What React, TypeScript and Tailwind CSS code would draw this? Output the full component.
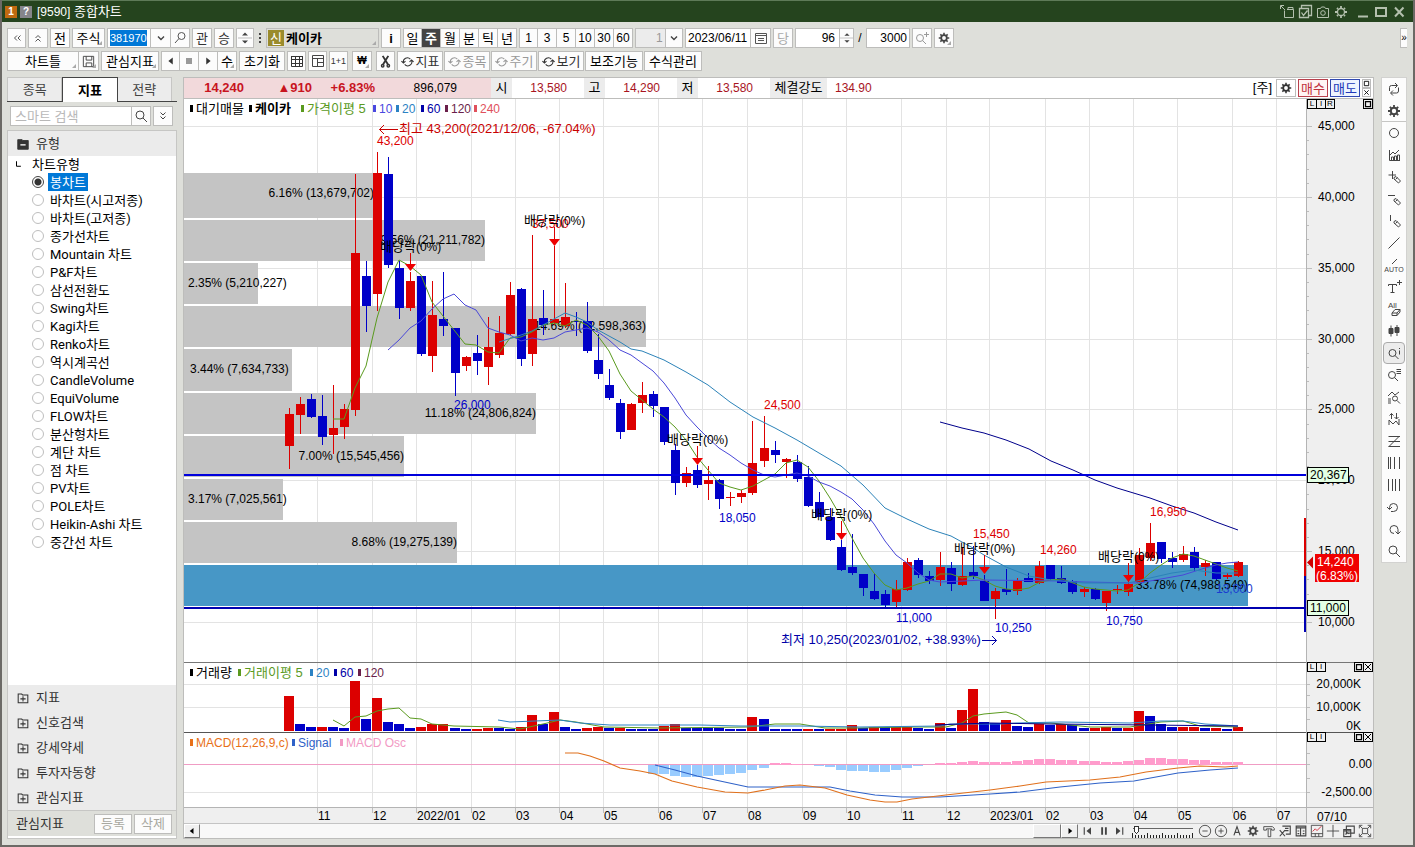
import React from "react";

const RED = "#dc0000";
const BLUE = "#0000c8";

type Candle = [string, number, number, number, number];

/* direction, body top, body bottom, high, low */
const candles: Candle[] = [
  ["u", 414, 446, 408, 469], ["u", 404, 415, 397, 434], ["d", 399, 417, 394, 418], ["d", 416, 437, 395, 445],
  ["u", 428, 435, 385, 454], ["u", 409, 427, 404, 439], ["u", 253, 410, 174, 416], ["d", 276, 306, 261, 332],
  ["u", 173, 294, 152, 311], ["d", 174, 265, 157, 268], ["d", 268, 308, 261, 319], ["u", 281, 308, 272, 311],
  ["d", 276, 354, 276, 356], ["u", 315, 356, 281, 372], ["d", 319, 326, 272, 336], ["d", 328, 373, 328, 396],
  ["u", 357, 366, 356, 371], ["d", 353, 361, 335, 375], ["u", 347, 367, 317, 385], ["u", 333, 355, 316, 358],
  ["u", 295, 334, 282, 335], ["d", 289, 359, 288, 366], ["u", 319, 354, 235, 366], ["d", 318, 325, 290, 335],
  ["u", 319, 323, 246, 325], ["u", 317, 326, 283, 328], ["d", 321, 322, 312, 336], ["d", 321, 351, 302, 353],
  ["d", 360, 374, 334, 379], ["d", 385, 398, 369, 400], ["d", 403, 432, 399, 439], ["u", 404, 430, 403, 430],
  ["u", 395, 403, 382, 413], ["d", 394, 406, 391, 417], ["d", 407, 442, 407, 445], ["d", 450, 483, 444, 495],
  ["u", 473, 483, 467, 487], ["d", 470, 485, 465, 488], ["u", 480, 484, 466, 500], ["d", 480, 499, 479, 509],
  ["u", 497, 498, 492, 506], ["u", 493, 497, 490, 503], ["u", 463, 493, 421, 495], ["u", 448, 461, 416, 467],
  ["d", 450, 455, 441, 463], ["u", 459, 462, 458, 478], ["d", 462, 479, 455, 482], ["d", 477, 506, 466, 507],
  ["d", 502, 517, 492, 517], ["d", 517, 540, 508, 541], ["d", 547, 570, 540, 571], ["d", 567, 573, 534, 575],
  ["d", 574, 588, 574, 596], ["d", 591, 599, 573, 600], ["d", 594, 605, 590, 607], ["u", 589, 602, 580, 607],
  ["u", 562, 590, 558, 591], ["d", 560, 575, 558, 578], ["d", 576, 581, 571, 584], ["u", 567, 580, 552, 586],
  ["d", 568, 584, 562, 591], ["u", 576, 585, 547, 586], ["d", 572, 576, 546, 579], ["d", 581, 601, 575, 601],
  ["u", 591, 599, 588, 619], ["d", 589, 592, 569, 595], ["u", 581, 591, 578, 595], ["d", 578, 582, 573, 582],
  ["u", 566, 583, 561, 584], ["d", 565, 579, 565, 580], ["d", 578, 583, 566, 584], ["d", 581, 592, 580, 594],
  ["u", 589, 592, 587, 597], ["d", 589, 599, 588, 600], ["u", 591, 603, 591, 611], ["u", 589, 590, 585, 594],
  ["u", 584, 592, 580, 596], ["u", 555, 582, 548, 583], ["u", 543, 558, 523, 561], ["d", 542, 559, 542, 563],
  ["d", 558, 562, 552, 568], ["u", 554, 560, 546, 562], ["d", 552, 568, 547, 571], ["u", 563, 567, 560, 576],
  ["d", 562, 579, 562, 580], ["u", 575, 577, 573, 579], ["u", 562, 576, 561, 577],
];

const barX = (i: number) => 289 + Math.round(i * 11.035);

const volumes =
  "u35 d7 d4 u4 d4 d3 u50 d12 u33 d9 d7 d3 u4 u7 u7 d3 d2 u2 u3 d3 d2 u4 u16 d7 u19 d4 d2 u3 u4 d3 u3 d2 d2 d2 u5 u7 d3 d3 d3 d3 d2 d2 u14 d12 d2 d2 d2 u2 d2 u2 u2 u6 d3 u4 d4 u4 u4 d3 d2 u8 d3 u21 u42 d9 d8 u11 d5 d4 u7 d6 u7 d6 d3 u3 u4 d3 u3 u20 d15 d7 d4 u4 u4 d3 u3 d2 u4".split(" ");

/* MACD oscillator, first value belongs to bar 33 */
const osc = [-9, -9, -11, -12, -12, -11, -10, -9, -8, -5, -3, 2, 2, 1, 0, -1, -2, -5, -6, -6, -7, -7, -5, -3, -1, 0, 2, 2, 3, 4, 3, 3, 3, 4, 5, 6, 6, 5, 5, 4, 4, 3, 3, 4, 5, 7, 7, 6, 6, 5, 5, 3, 3, 3];

const ma5 = "333,419 344,419 355,388 366,366 377,318 388,282 399,260 410,266 421,275 432,302 443,316 454,330 465,344 476,345 488,352 499,353 510,338 521,337 532,332 543,325 554,323 565,326 576,320 587,325 598,336 609,351 620,374 631,391 642,400 653,409 664,417 675,427 686,440 697,457 708,470 719,483 730,487 741,490 753,486 764,480 775,474 786,463 797,460 808,467 819,481 830,498 841,517 852,538 863,558 874,573 885,585 896,590 907,588 918,584 929,581 940,574 951,574 962,578 973,576 984,580 995,586 1006,589 1017,590 1029,588 1040,582 1051,580 1062,579 1073,583 1084,587 1095,589 1106,590 1117,591 1128,590 1139,583 1150,573 1161,565 1172,558 1183,554 1194,556 1205,560 1216,564 1227,568 1238,571";
const ma10 = "388,350 399,340 410,328 421,321 432,309 443,299 454,294 465,305 476,310 488,328 499,332 510,335 521,341 532,338 543,340 554,338 565,332 576,330 587,328 598,332 609,340 620,350 631,355 642,363 653,371 664,383 675,398 686,415 697,427 708,438 719,448 730,455 741,463 753,470 764,475 775,477 786,475 797,473 808,476 819,482 830,486 841,492 852,499 863,510 874,524 885,541 896,555 907,563 918,573 929,580 940,582 984,580 1062,581 1084,582 1139,583 1150,581 1161,579 1183,575 1205,568 1216,565 1227,563 1238,562";
const ma20 = "499,342 521,335 532,331 554,319 565,313 576,317 587,322 598,330 620,342 631,349 642,351 664,360 686,372 708,385 730,402 753,417 775,428 797,440 819,453 841,466 863,485 885,508 907,519 929,529 951,536 973,548 984,555 1006,567 1029,576 1051,580 1084,583 1128,583 1150,578 1172,573 1194,570 1216,573 1238,573";
const ma60 = "940,422 962,428 984,433 1006,440 1029,449 1051,461 1073,470 1095,480 1117,488 1150,498 1172,506 1194,513 1216,522 1238,530";
const vma5 = "333,720 344,726 355,717 366,716 377,711 388,709 399,708 410,718 421,719 432,724 454,726 499,727 520,729 543,724 560,720 576,722 604,727 660,728 748,727 775,724 800,724 825,728 860,728 907,727 946,727 962,723 973,716 984,714 1006,712 1017,715 1029,723 1051,723 1090,727 1130,727 1161,722 1183,721 1200,726 1238,727";
const vma20 = "498,720 510,722 560,720 580,723 610,725 700,725 740,726 800,726 860,727 940,726 950,724 1000,724 1017,723 1060,722 1130,723 1161,721 1183,721 1205,724 1238,726";
const vma60 = "935,725 960,724 990,723 1050,724 1150,725 1238,726";
const macd = "565,753 578,753 590,756 604,761 620,768 640,771 655,774 672,781 697,787 725,792 748,793 765,790 785,786 800,785 825,788 847,795 870,800 885,802 897,802 912,799 946,795 990,790 1020,786 1046,782 1090,780 1120,777 1146,772 1178,768 1200,766 1225,767 1238,766";
const signal = "655,765 675,770 697,776 720,781 748,787 780,787 830,787 850,791 875,795 902,797 940,797 990,794 1020,792 1060,787 1100,783 1134,781 1178,773 1210,770 1238,768";

const bands: [number, number, number, string][] = [
  [173, 45, 374, "6.16% (13,679,702)"], [220, 41, 485, "9.56% (21,211,782)"], [263, 41, 258, "2.35% (5,210,227)"],
  [306, 41, 646, "14.69% (32,598,363)"], [349, 42, 292, "3.44% (7,634,733)"], [393, 41, 536, "11.18% (24,806,824)"],
  [436, 41, 404, "7.00% (15,545,456)"], [479, 41, 283, "3.17% (7,025,561)"], [522, 41, 457, "8.68% (19,275,139)"],
  [565, 41, 1248, "33.78% (74,988,549)"],
];

const months: [number, string][] = [
  [318, "11"], [373, "12"], [417, "2022/01"], [472, "02"], [516, "03"], [560, "04"], [604, "05"], [659, "06"], [703, "07"],
  [748, "08"], [803, "09"], [847, "10"], [902, "11"], [947, "12"], [990, "2023/01"], [1046, "02"], [1090, "03"],
  [1134, "04"], [1178, "05"], [1233, "06"], [1277, "07"],
];

const prices: [number, string][] = [
  [126, "45,000"], [197, "40,000"], [268, "35,000"], [339, "30,000"], [409, "25,000"], [480, "20,000"], [551, "15,000"], [622, "10,000"],
];

const marks: [number, number, string, string][] = [
  [377, 145, "43,200", RED], [454, 409, "26,000", BLUE], [532, 228, "37,500", RED], [719, 522, "18,050", BLUE],
  [764, 409, "24,500", RED], [896, 622, "11,000", BLUE], [973, 538, "15,450", RED], [995, 632, "10,250", BLUE],
  [1040, 554, "14,260", RED], [1106, 625, "10,750", BLUE], [1150, 516, "16,950", RED], [1216, 593, "13,000", "#1a3cd0"],
];

const dividends: [number, number, number][] = [
  [410, 246, 264], [554, 220, 239], [697, 439, 458], [841, 514, 533], [984, 548, 567], [1128, 556, 575],
];

type Legend = [number, string, string, boolean?];
const priceLegend: Legend[] = [
  [190, "대기매물", "#000"], [249, "케이카", "#000", true], [301, "가격이평 5", "#5a9a1e"], [373, "10", "#4a48e0"],
  [396, "20", "#2b82c4"], [421, "60", "#0000a8"], [445, "120", "#6a1f4a"], [474, "240", "#e0505c"],
];
const volumeLegend: Legend[] = [
  [190, "거래량", "#000"], [238, "거래이평 5", "#5a9a1e"], [310, "20", "#2b82c4"], [334, "60", "#0000a8"], [358, "120", "#6a1f4a"],
];
const macdLegend: Legend[] = [
  [190, "MACD(12,26,9,c)", "#e87018"], [292, "Signal", "#2f62c8"], [340, "MACD Osc", "#f29ac4"],
];

function LegendRow({ items, y, latin }: { items: Legend[]; y: number; latin?: boolean }) {
  return (
    <g>
      {items.map(([x, label, color, bold]) => (
        <g key={x} fill={color}>
          <rect x={x} y={y - 8} width="3" height="7" shapeRendering="crispEdges" />
          <text x={x + 6} y={y} fontSize={latin || /^\d/.test(label) ? 12 : 13} fontWeight={bold ? 700 : 400}>{label}</text>
        </g>
      ))}
    </g>
  );
}

function Chart() {
  return (
    <svg viewBox="184 99 1189 725" className="block h-auto w-full bg-white" role="img" aria-label="케이카 주봉 차트" fontSize="12">
      <rect x="1307" y="99" width="66" height="725" fill="#efefef" />
      <rect x="184" y="808" width="1189" height="16" fill="#efefef" />
      <g stroke="#e3e3e3" shapeRendering="crispEdges">
        {months.map(([x]) => <path key={x} d={`M${x - 1}.5 99V807`} />)}
        {prices.map(([y]) => <path key={y} d={`M184 ${y}.5H1306`} />)}
        {[684, 707, 792].map((y) => <path key={y} d={`M184 ${y}.5H1306`} />)}
      </g>
      <g shapeRendering="crispEdges">
        {bands.map(([y, h, right]) => (
          <rect key={y} x="184" y={y} width={right - 184} height={h} fill={right === 1248 ? "#4797c6" : "#c4c4c4"} />
        ))}
      </g>
      {bands.map(([y, , right, label]) => (
        <text key={y} x={right < 300 ? (right === 292 ? 190 : 188) : right} y={y + 24} textAnchor={right < 300 ? "start" : "end"}>{label}</text>
      ))}

      <g shapeRendering="crispEdges">
        {candles.map(([dir, top, bottom, high, low], i) => (
          <g key={i} fill={dir === "u" ? RED : BLUE}>
            <rect x={barX(i)} y={high} width="1" height={low - high} />
            <rect x={barX(i) - 4} y={top} width="9" height={bottom - top} />
          </g>
        ))}
      </g>
      <g fill="none" strokeWidth="1">
        <polyline points={ma5} stroke="#5a9a1e" />
        <polyline points={ma10} stroke="#4a48d8" />
        <polyline points={ma20} stroke="#2b82b8" />
        <polyline points={ma60} stroke="#00008b" />
      </g>
      <g shapeRendering="crispEdges">
        <rect x="184" y="474" width="1123" height="2" fill="#0000dc" />
        <rect x="184" y="607" width="1123" height="2" fill="#0000b0" />
        <rect x="1304" y="518" width="3" height="58" fill={RED} />
        <rect x="1304" y="576" width="3" height="56" fill="#0000b4" />
      </g>

      {marks.map(([x, y, label, color]) => <text key={x} x={x} y={y} fill={color} fontSize="12">{label}</text>)}
      {dividends.map(([x, y, tip]) => (
        <g key={x}>
          <path d={`M${x}.5 ${y + 7}V${tip}`} stroke={RED} />
          <path d={`M${x - 5} ${tip}h11l-5.500 7z`} fill="#ee0000" />
          <text x={x - 30} y={y + 5} fontSize="13">배당락<tspan fontSize="12">(0%)</tspan></text>
        </g>
      ))}
      <path d="M398 129.500H379.500M384 125l-4.500 4.500 4.500 4.500" fill="none" stroke="#c80000" />
      <text x="399" y="133" fontSize="13" fill="#c80000">최고 43,200(2021/12/06, -67.04%)</text>
      <text x="781" y="644" fontSize="13" fill="#0000a8">최저 10,250(2023/01/02, +38.93%)</text>
      <path d="M982 640.500H996.500M992 636l4.500 4.500-4.500 4.500" fill="none" stroke="#0000a8" />
      <LegendRow items={priceLegend} y={113} />

      <g shapeRendering="crispEdges">
        {volumes.map((v, i) => (
          <rect key={i} x={barX(i) - 5} y={731 - Number(v.slice(1))} width="10" height={v.slice(1)} fill={v[0] === "u" ? RED : BLUE} />
        ))}
        <rect x="184" y="662" width="1189" height="1" fill="#777" />
        <rect x="184" y="732" width="1189" height="1" fill="#555" />
        <rect x="184" y="764" width="1122" height="1" fill="#f09cc4" />
        {osc.map((v, i) => (
          <rect key={i} x={barX(i + 33) - 5} y={v > 0 ? 765 - v : 765} width="10" height={Math.abs(v)} fill={v > 0 ? "#ff9ccc" : "#99ccff"} />
        ))}
        <rect x="1306" y="99" width="1" height="725" fill="#b4b4b4" />
        <rect x="184" y="807" width="1189" height="1" fill="#b4b4b4" />
        <rect x="184" y="823" width="1189" height="1" fill="#c4c4c4" />
      </g>
      <g fill="none" strokeWidth="1">
        <polyline points={vma5} stroke="#5a9a1e" />
        <polyline points={vma20} stroke="#2b82c4" />
        <polyline points={vma60} stroke="#00008b" />
        <polyline points={signal} stroke="#2f62c8" strokeWidth="1.2" />
        <polyline points={macd} stroke="#e0701c" strokeWidth="1.2" />
      </g>
      <LegendRow items={volumeLegend} y={677} />
      <LegendRow items={macdLegend} y={747} latin />

      <g stroke="#bdbdbd" shapeRendering="crispEdges">
        {months.map(([x]) => <path key={x} d={`M${x - 1}.5 808v5`} />)}
        {Array.from({ length: 36 }, (_, i) => <path key={i} d={`M1307 ${Math.round(126 + i * 14.17)}.5h${i % 5 ? 2 : 5}`} />)}
        {[684, 695, 707, 719, 753, 764, 778, 792].map((y) => <path key={y} d={`M1307 ${y}.5h3`} />)}
      </g>
      {months.map(([x, label]) => <text key={x} x={x} y="820">{label}</text>)}
      {prices.map(([y, label]) => <text key={y} x="1318" y={y + 4}>{label}</text>)}
      <text x="1317" y="821">07/10</text>
      <g textAnchor="end">
        <text x="1361" y="688">20,000K</text>
        <text x="1361" y="711">10,000K</text>
        <text x="1361" y="730">0K</text>
        <text x="1372" y="768">0.00</text>
        <text x="1372" y="796">-2,500.00</text>
      </g>
      <g shapeRendering="crispEdges">
        <rect x="1307.500" y="467.500" width="41" height="15" fill="#e4ffe4" stroke="#000" />
        <rect x="1307.500" y="600.500" width="41" height="15" fill="#e4ffe4" stroke="#000" />
        <rect x="1315" y="554" width="44" height="28" fill="#f00000" />
      </g>
      <path d="M1307 562.500l6-6v12z" fill="#d00000" />
      <text x="1310" y="479">20,367</text>
      <text x="1310" y="612">11,000</text>
      <text x="1317" y="566" fill="#fff">14,240</text>
      <text x="1316" y="580" fill="#fff">(6.83%)</text>
    </svg>
  );
}

function Icon({ children, size = 16, className = "" }: { children: React.ReactNode; size?: number; className?: string }) {
  return (
    <svg width={size} height={size} viewBox="0 0 16 16" fill="none" stroke="currentColor" className={`shrink-0 ${className}`} aria-hidden="true">
      {children}
    </svg>
  );
}

const gear = (
  <>
    <circle cx="8" cy="8" r="3.200" strokeWidth="2" />
    <path d="M8 2v2.500M8 11.500V14M2 8h2.500M11.500 8H14M3.800 3.800l1.700 1.700M10.500 10.500l1.700 1.700M3.800 12.200l1.700-1.700M10.500 5.500l1.700-1.700" strokeWidth="1.800" />
  </>
);
const magnifier = <><circle cx="7" cy="7" r="4" /><path d="M10 10l4 4" /></>;
const cycle = <path d="M3 9.500a5 5 0 0 1 8.500-4.500M13 6.500a5 5 0 0 1-8.500 5M.500 7.500L3 10l2.500-2.500M10.500 8.500L13 6l2.500 2.500" strokeWidth="1.300" />;
const pencil = <path d="M8 8.500l2-1 4.500 4.500-2 2L8 10zM9.500 10.500l2-2" />;
const triLeft = <path d="M10 4v8L5 8z" fill="currentColor" stroke="none" />;
const triRight = <path d="M6 4v8l5-4z" fill="currentColor" stroke="none" />;
const spin = <path d="M8 2.500l3 3H5zM8 13.500l3-3H5z" fill="currentColor" stroke="none" />;
const chevron = <path d="M5 6.500l3 3 3-3" strokeWidth="1.400" />;

const tools: [string, React.ReactNode][] = [
  ["새로고침", <path d="M3.500 10V6.500a2 2 0 0 1 2-2H11M9 2l2.500 2.500L9 7M12.500 6.500V10a2 2 0 0 1-2 2H5M7 9.500L4.500 12 7 14.500" />],
  ["설정", gear],
  ["원", <circle cx="8" cy="8" r="4.500" />],
  ["차트", <path d="M3.500 3v10.500H14M5.500 13v-3h2v3M8.500 13V9h2v4M11.500 13V8h2v5M4 8l3-3 2 2 4-4" />],
  ["십자선", <><path d="M6.500 2v8M2.500 6H10" />{pencil}</>],
  ["수평선", <><path d="M2 4.500h7" />{pencil}</>],
  ["수직선", <><path d="M4.500 2v6" />{pencil}</>],
  ["추세선", <path d="M2.500 13.500l11-11" />],
  ["자동 추세선", <path d="M6 6l5-5" />],
  ["글자", <><path d="M2.500 7V5.500h8V7M6.500 5.500V14M4.500 13.500h4M11 3.500h5M13.500 1v5" /></>],
  ["모두 지우기", <><text x="2" y="7" fontSize="8" fill="currentColor" stroke="none">All</text><path d="M6 12l3-3.500h5L11 12zM6 12v2.500h5V12M11 14.500l3-3.500V8.500" /></>],
  ["봉", <path d="M5 2.500v11M11 2v11M3 5.500h4v5H3zM9 4.500h4v5H9z" fill="currentColor" />],
  ["정보 확대", <><circle cx="6.500" cy="8" r="3.500" /><path d="M9 10.500l3.500 3.500M13.500 5.500v4M13.500 3v1" /></>],
  ["목록 확대", <><circle cx="6" cy="8" r="3.500" /><path d="M8.500 10.500L12 14M10.500 2.500H15M10.500 4.500H15M10.500 6.500H15" /></>],
  ["패턴 검색", <><path d="M2 7l4-4 3 3 4-3M2 10h3M2 12h3M2 14h3" /><circle cx="9" cy="9.500" r="2.500" /><path d="M11 11.500l3 3" /></>],
  ["지그재그", <path d="M3 14V9l4 4 3-3 3 4V8M5.500 8V2.500M3.500 4.500l2-2 2 2M10.500 2v6M8.500 6l2 2 2-2" />],
  ["되돌림", <path d="M2.500 3.500H14M2.500 8.500H14M2.500 13.500H14M13 3.500L3 13.500" />],
  ["시간대", <path d="M2.500 2v12M4.500 2v12M8.500 2v12M13.500 2v12" />],
  ["주기선", <path d="M2.500 2v12M6.500 2v12M9.500 2v12M13.500 2v12" />],
  ["실행 취소", <path d="M5 12.500h2.500a4 4 0 1 0-4-4V10M1 8l2.500 2.500L6 8" />],
  ["다시 실행", <path d="M8 12.500a4 4 0 1 1 4-4v4M9.500 10.500l2.500 2.500 2.500-2.500" />],
  ["확대", magnifier],
];

const btn = "flex h-5 shrink-0 items-center justify-center border border-[#bdbdbb] bg-[#fcfcfc] leading-none whitespace-nowrap";

function Corner() {
  return <span className="absolute right-0.5 bottom-0.5 border-2 border-transparent border-r-[#aaa] border-b-[#aaa]" />;
}

function Btn({ w, label, children, className = "", corner }: { w: string; label?: string; children?: React.ReactNode; className?: string; corner?: boolean }) {
  return (
    <button type="button" aria-label={label} className={`${btn} relative ${w} ${className}`}>
      {children}
      {corner && <Corner />}
    </button>
  );
}

function PeriodGroup({ items, w, active, className = "" }: { items: string[]; w: string; active?: string; className?: string }) {
  return (
    <div className={`flex ${className}`}>
      {items.map((t) => (
        <button key={t} type="button" className={`flex h-5 items-center justify-center border-y border-r border-[#bdbdbb] leading-none first:border-l ${w} ${t === active ? "bg-[#444] font-bold text-white" : "bg-[#fcfcfc]"}`}>{t}</button>
      ))}
    </div>
  );
}

function Toolbar() {
  return (
    <div className="flex flex-col gap-[3px] pt-1.5 pb-1.5">
      <div className="flex items-center gap-0.5">
        <Btn w="w-[19px]" label="처음" className="text-[#555]"><Icon><path d="M8 5.500L5.500 8 8 10.500M11.500 5.500L9 8l2.500 2.500" /></Icon></Btn>
        <Btn w="w-5" label="접기" className="text-[#555]"><Icon><path d="M5.500 8L8 5.500l2.500 2.500M5.500 11.500L8 9l2.500 2.500" /></Icon></Btn>
        <Btn w="w-5">전</Btn>
        <Btn w="w-[33px]" corner>주식</Btn>
        <div className="flex">
          <div className="flex h-5 w-11 items-center border border-[#bdbdbb] bg-white px-0.5">
            <input aria-label="종목코드" defaultValue="381970" className="h-4 w-[37px] bg-[#0078d7] text-[11px] text-white outline-none" />
          </div>
          <Btn w="w-5" label="종목 목록" className="border-l-0 text-[#444]"><Icon>{chevron}</Icon></Btn>
          <Btn w="w-[19px]" label="종목 검색" className="border-l-0 text-[#555]"><Icon><circle cx="9.500" cy="6" r="3.500" /><path d="M7 8.500l-4 4.500" /></Icon></Btn>
        </div>
        <Btn w="w-5" className="text-[#333]">관</Btn>
        <Btn w="w-5" className="text-[#333]">승</Btn>
        <Btn w="w-[18px]" label="위아래" className="text-[#444]"><Icon>{spin}<path d="M1 8h14" stroke="#bbb" /></Icon></Btn>
        <Icon className="-mx-1"><path d="M7 3h2v2H7zM7 7h2v2H7zM7 11h2v2H7z" fill="#444" stroke="none" /></Icon>
        <button type="button" className="relative flex h-5 w-[113px] items-center gap-0.5 border border-[#bdbdbb] bg-[#dedfda] px-px text-[13px] leading-none font-bold">
          <span className="flex size-4 items-center justify-center bg-[#9a8b2c] font-normal text-white">신</span>케이카
          <Corner />
        </button>
        <Btn w="w-5" className="font-bold">i</Btn>
        <PeriodGroup items={["일", "주", "월", "분", "틱", "년"]} w="w-[19px]" active="주" />
        <PeriodGroup items={["1", "3", "5", "10", "30", "60"]} w="w-[19px]" className="text-xs" />
        <div className="relative h-5 w-12 shrink-0">
          <select aria-label="주기 값" defaultValue="1" className="h-5 w-full appearance-none border border-[#bdbdbb] bg-[#ececec] pl-5 text-xs text-[#999]"><option>1</option></select>
          <span className="pointer-events-none absolute top-0 right-0 flex h-5 w-[18px] items-center justify-center border border-[#bdbdbb] bg-[#fcfcfc] text-[#444]"><Icon>{chevron}</Icon></span>
        </div>
        <div className="flex">
          <input aria-label="기준일" defaultValue="2023/06/11" className="h-5 w-[66px] border border-[#bdbdbb] bg-white pl-0.5 text-xs outline-none" />
          <Btn w="w-5" label="달력" className="border-l-0 text-[#555]"><Icon><path d="M2.500 3.500h11v10h-11zM3 5.500h10M5 8.500h6M5 10.500h6" /></Icon></Btn>
        </div>
        <Btn w="w-5" className="text-[#aaa]">당</Btn>
        <div className="flex">
          <input aria-label="표시 봉수" defaultValue="96" className="h-5 w-[45px] border border-[#bdbdbb] bg-white pr-1 text-right text-xs outline-none" />
          <Btn w="w-3.5" label="봉수 조절" className="border-l-0 text-[#444]"><Icon size={14}>{spin}<path d="M0 8h16" stroke="#bbb" /></Icon></Btn>
        </div>
        <span className="w-2 text-center text-xs">/</span>
        <input aria-label="전체 봉수" defaultValue="3000" className="h-5 w-11 border border-[#bdbdbb] bg-white pr-0.5 text-right text-xs outline-none" />
        <Btn w="w-5" label="확대" className="text-[#999]"><Icon><circle cx="6" cy="8" r="3.500" /><path d="M8.500 10.500L12 14M10 4.500h5M12.500 2v5" /></Icon></Btn>
        <Btn w="w-5" label="설정" corner className="text-[#444]"><Icon size={14}>{gear}</Icon></Btn>
        <button type="button" aria-label="더보기" className="ml-auto h-5 w-[7px] border border-r-0 border-[#bdbdbb] bg-[#fcfcfc] text-[10px] leading-none">»</button>
      </div>
      <div className="flex items-center gap-0.5">
        <div className="flex">
          <Btn w="w-[72px]" corner>차트틀</Btn>
          <Btn w="w-5" label="저장" corner className="border-l-0 text-[#444]"><Icon size={15}><path d="M2.500 2.500h11v11h-11zM5.500 2.500v4h6v-4M5.500 13.500v-4h6v4" /></Icon></Btn>
        </div>
        <Btn w="w-[58px]" corner>관심지표</Btn>
        <div className="flex">
          <Btn w="w-[19px]" label="이전" className="text-[#333]"><Icon size={14}>{triLeft}</Icon></Btn>
          <Btn w="w-[19px]" label="정지" className="border-l-0 bg-[#ececec] text-[#999]"><Icon><path d="M5 5h6v6H5z" fill="currentColor" stroke="none" /></Icon></Btn>
          <Btn w="w-[19px]" label="다음" className="border-l-0 text-[#333]"><Icon size={14}>{triRight}</Icon></Btn>
          <Btn w="w-[19px]" corner className="border-l-0">수</Btn>
        </div>
        <Btn w="w-[46px]">초기화</Btn>
        <Btn w="w-[19px]" label="표" className="text-[#333]"><Icon><path d="M2.500 3v10.500h11V3M2 3.500h12M2 6.500h12M2 10.500h12M6.500 3v10.500M10.500 3v10.500" /></Icon></Btn>
        <Btn w="w-[19px]" label="화면 분할" className="text-[#444]"><Icon><path d="M2.500 2.500h11v11h-11zM2.500 5.500h11M7.500 5.500v8M7.500 9.500h6" /></Icon></Btn>
        <Btn w="w-[19px]" className="text-[9px] text-[#333]">1+1</Btn>
        <Btn w="w-5" corner className="ml-0.5 text-[10px] font-bold">₩</Btn>
        <Btn w="w-[19px]" label="자르기" className="ml-0.5 text-[#333]"><Icon size={15}><path d="M5 2l5.500 9M11 2L5.500 11" strokeWidth="2" /><circle cx="5" cy="12.500" r="1.300" strokeWidth="1.500" /><circle cx="11" cy="12.500" r="1.300" strokeWidth="1.500" /></Icon></Btn>
        <div className="flex gap-px">
          {["지표", "종목", "주기", "보기"].map((t, i) => (
            <Btn key={t} w="w-[46px]" className={i === 1 || i === 2 ? "gap-0.5 bg-[#f0f0f0] text-[#999]" : "gap-0.5 text-[#333]"}><Icon size={13}>{cycle}</Icon>{t}</Btn>
          ))}
          <Btn w="w-[58px]">보조기능</Btn>
          <Btn w="w-[58px]">수식관리</Btn>
        </div>
      </div>
    </div>
  );
}

const chartTypes = ["봉차트", "바차트(시고저종)", "바차트(고저종)", "종가선차트", "Mountain 차트", "P&F차트", "삼선전환도", "Swing차트", "Kagi차트", "Renko차트", "역시계곡선", "CandleVolume", "EquiVolume", "FLOW차트", "분산형차트", "계단 차트", "점 차트", "PV차트", "POLE차트", "Heikin-Ashi 차트", "중간선 차트"];

function Sidebar() {
  return (
    <aside className="flex w-[170px] shrink-0 flex-col">
      <div className="flex h-[25px] border-b border-[#444] pr-[5px]">
        <button type="button" className="flex-1 border border-b-0 border-[#c6c6c4] bg-[#ececec] leading-none text-[#444]">종목</button>
        <button type="button" className="-mb-px flex-1 border border-b-0 border-[#444] bg-white leading-none font-bold">지표</button>
        <button type="button" className="flex-1 border border-b-0 border-l-0 border-[#c6c6c4] bg-[#ececec] leading-none text-[#444]">전략</button>
      </div>
      <div className="flex px-[3px] py-1">
        <input aria-label="스마트 검색" placeholder="스마트 검색" className="h-5 w-[122px] border border-[#bdbdbb] bg-white px-1 outline-none placeholder:text-[#b8b8b8]" />
        <Btn w="w-[19px]" label="검색" className="border-l-0 text-[#444]"><Icon>{magnifier}</Icon></Btn>
        <Btn w="w-5" label="펼치기" className="ml-0.5 text-[#444]"><Icon><path d="M5.500 4.500L8 7l2.500-2.500M5.500 8.500L8 11l2.500-2.500" /></Icon></Btn>
      </div>
      <div className="flex flex-1 flex-col border border-[#c6c6c4] bg-white">
        <button type="button" className="flex h-[25px] items-center gap-1.5 bg-[#ebebeb] px-2 text-[#333]">
          <Icon size={14}><path d="M2 3h5l1 1h6v10H2z" fill="#333" /><path d="M5 9h6" stroke="#fff" strokeWidth="1.500" /></Icon>유형
        </button>
        <div className="flex h-[17px] items-center gap-2 px-1.5 leading-none">
          <Icon size={10}><path d="M4 2v8h7" strokeWidth="1.600" /></Icon>차트유형
        </div>
        <fieldset className="flex-1 font-['Roboto','Noto_Sans_CJK_KR',sans-serif]">
          {chartTypes.map((t, i) => (
            <label key={t} className="flex h-[18px] items-center gap-1 pl-6 leading-none whitespace-nowrap">
              <input type="radio" name="chart-type" defaultChecked={i === 0} className="peer size-3 appearance-none rounded-full border border-[#bebebe] bg-white checked:border-[#444] checked:bg-[radial-gradient(circle,#333_0_3px,#fff_4px)]" />
              <span className="flex h-[18px] items-center px-0.5 peer-checked:bg-[#0078d7] peer-checked:text-white">{t}</span>
            </label>
          ))}
        </fieldset>
        <div className="bg-[#ebebeb]">
          {["지표", "신호검색", "강세약세", "투자자동향", "관심지표"].map((t) => (
            <button key={t} type="button" className="flex h-[25px] w-full items-center gap-1.5 px-2 leading-none text-[#333]">
              <Icon size={14}><path d="M2.500 3.500h4l1 1h6v9h-11zM5 9h6M8 6v6" strokeWidth="1.200" /></Icon>{t}
            </button>
          ))}
        </div>
        <div className="flex h-7 items-center gap-0.5 border-t border-b-2 border-t-[#c6c6c4] border-b-white bg-[#dedfda] pr-1 pl-2 leading-none text-[#333]">
          <span className="flex-1">관심지표</span>
          <Btn w="w-[38px]" className="bg-[#f2f2f2] text-[#a8a8a0]">등록</Btn>
          <Btn w="w-[38px]" className="bg-[#f2f2f2] text-[#a8a8a0]">삭제</Btn>
        </div>
      </div>
    </aside>
  );
}

function QuoteBar() {
  return (
    <div className="flex h-[21px] items-stretch border-b border-[#bdbdbb] bg-white text-xs leading-5">
      <div className="flex w-[307px] bg-[#f2d9db] text-[13px] font-bold text-[#c8141e]">
        <span className="w-[60px] text-right">14,240</span>
        <span className="w-[68px] text-right">▲910</span>
        <span className="w-[63px] text-right">+6.83%</span>
        <span className="w-[82px] text-right text-xs leading-5 font-normal text-black">896,079</span>
      </div>
      {[["시", "13,580"], ["고", "14,290"], ["저", "13,580"]].map(([k, v]) => (
        <React.Fragment key={k}>
          <span className="w-[21px] bg-[#ececec] text-center text-[13px]">{k}</span>
          <span className="w-[72px] pr-[17px] text-right text-[#a8141e]">{v}</span>
        </React.Fragment>
      ))}
      <span className="w-[57px] bg-[#ececec] text-center text-[13px]">체결강도</span>
      <span className="pl-2 text-[#a8141e]">134.90</span>
      <div className="ml-auto flex items-center gap-0.5 pr-0.5">
        <span className="pr-0.5 text-[13px]">[주]</span>
        <button type="button" aria-label="차트 설정" className="flex h-[18px] w-5 items-center justify-center border border-[#bdbdbb] text-[#333]"><Icon size={14}>{gear}</Icon></button>
        <button type="button" className="h-[18px] w-[30px] border border-[#b8404c] bg-[#fff4f4] text-[13px] leading-none text-[#c0303c]">매수</button>
        <button type="button" className="h-[18px] w-[30px] border border-[#3048b0] bg-[#eef4ff] text-[13px] leading-none text-[#2038b8]">매도</button>
        <div className="flex flex-col">
          <button type="button" aria-label="최대화" className="size-[9px] border border-[#bbb]"><Icon size={7}><path d="M3 3h10v10H3z" strokeWidth="2" /></Icon></button>
          <button type="button" aria-label="닫기" className="size-[9px] border border-[#bbb]"><Icon size={7}><path d="M3 3l10 10M13 3L3 13" strokeWidth="2" /></Icon></button>
        </div>
      </div>
    </div>
  );
}

const tiny = "flex h-[10px] w-[10px] items-center justify-center border border-black bg-[#efefef] text-[8px] leading-none -mr-px";

function PaneButtons({ letters, place, close }: { letters: string[]; place: string; close?: boolean }) {
  return (
    <div className={`absolute right-0 flex w-[66px] justify-between pr-px ${place}`}>
      <div className="flex">{letters.map((l) => <button key={l} type="button" className={tiny}>{l}</button>)}</div>
      <div className="flex">
        <button type="button" aria-label="창 확대" className={tiny}><Icon size={8}><path d="M3 3h10v10H3z" strokeWidth="2.500" /></Icon></button>
        {close && <button type="button" aria-label="창 닫기" className={tiny}><Icon size={8}><path d="M2 2l12 12M14 2L2 14" strokeWidth="2" /></Icon></button>}
      </div>
    </div>
  );
}

const bottomIcons: [string, React.ReactNode][] = [
  ["축소", <><circle cx="8" cy="8" r="6.500" /><path d="M5 8h6" /></>],
  ["확대", <><circle cx="8" cy="8" r="6.500" /><path d="M5 8h6M8 5v6" /></>],
  ["글자 크기", <path d="M4.500 13L8 3l3.500 10M6 9.500h4" strokeWidth="1.300" />],
  ["설정", gear],
  ["도구", <path d="M2 3h10l2 2v2h-3V5.500H5V7H2zM7 6v8.500h3V6" />],
  ["엑셀", <path d="M5 2.500h9v9H9M8 5h4M8 7.500h4M2 7l6 7M8 7l-6 7" strokeWidth="1.300" />],
  ["데이터", <path d="M2.500 2.500h11v11h-11zM2 4.500h12M7.500 5v8.500M4 8h2M4 11h2M10 8h2M10 11h2" strokeWidth="1.300" />],
  ["지표 창", <><path d="M1.500 1.500h13v13h-13zM1.500 11h13M6 11v3.500M10 11v3.500" /><path d="M3 8.500l3-3 2 2 5-5" stroke="#d02030" /></>],
  ["십자선", <path d="M8 1v14M1 8h14" />],
  ["창 복사", <path d="M5 2.500h9v8H5zM2 6.500h8v8H2zM2 8h8M4 12l2-2 2 1" strokeWidth="1.300" />],
  ["전체 화면", <path d="M5 5h6v6H5zM1.500 5V1.500H5M11 1.500h3.500V5M14.500 11v3.500H11M5 14.500H1.500V11M2 2l3 3M14 2l-3 3M2 14l3-3M14 14l-3-3" />],
];

function BottomBar() {
  const raised = "flex h-3.5 items-center justify-center border border-t-white border-r-[#777] border-b-[#777] border-l-white bg-[#f0f0f0]";
  return (
    <div className="flex h-3.5 items-center bg-[#f0f0f0]">
      <button type="button" aria-label="왼쪽으로" className={`w-4 ${raised}`}><Icon size={12}>{triLeft}</Icon></button>
      <div className="flex h-3.5 flex-1 justify-end bg-[#f8f8f8]"><div className={`w-7 ${raised}`} /></div>
      <button type="button" aria-label="오른쪽으로" className={`w-[17px] ${raised}`}><Icon size={12}>{triRight}</Icon></button>
      <div className="flex w-[53px] items-center justify-between pr-1.5 pl-1 text-[#444]">
        <button type="button" aria-label="처음으로"><Icon size={12}><path d="M3 3v10" strokeWidth="1.500" /><path d="M12 3v10L6 8z" fill="currentColor" stroke="none" /></Icon></button>
        <button type="button" aria-label="일시정지"><Icon size={12}><path d="M5.500 3v10M10.500 3v10" strokeWidth="2.500" /></Icon></button>
        <button type="button" aria-label="끝으로"><Icon size={12}><path d="M13 3v10" strokeWidth="1.500" /><path d="M4 3v10l6-5z" fill="currentColor" stroke="none" /></Icon></button>
      </div>
      <svg width="66" height="14" viewBox="0 0 66 14" className="shrink-0" role="img" aria-label="확대 비율" shapeRendering="crispEdges">
        <path d="M2 4.500h60" stroke="#666" />
        {Array.from({ length: 21 }, (_, i) => <path key={i} d={`M${1 + i * 3}.5 ${i % 5 ? 11 : 9}V14`} stroke="#222" />)}
        <path d="M3.500 2.500h4v5l-2 2-2-2z" fill="#fff" stroke="#333" />
      </svg>
      <div className="flex w-[176px] shrink-0 text-[#444]">
        {bottomIcons.map(([label, path]) => (
          <button key={label} type="button" aria-label={label} className="flex w-4 items-center justify-center"><Icon size={14}>{path}</Icon></button>
        ))}
      </div>
    </div>
  );
}

export default function App() {
  return (
    <div className="flex min-h-screen flex-col border-x-2 border-b-2 border-[#6c6a66] bg-[#dedfda] font-['Liberation_Sans','Noto_Sans_CJK_KR',sans-serif] text-[13px] text-black">
      <header className="flex h-[22px] items-center gap-[3px] border-t border-[#5e7a58] bg-[#25441e] pr-1.5 pl-[3px] text-white">
        <span className="flex size-3 items-center justify-center bg-[#c06a10] text-[10px] leading-none font-bold">1</span>
        <span className="flex size-3 items-center justify-center bg-[#85858a] text-[10px] leading-none font-bold">?</span>
        <h1 className="ml-0.5 text-[13px] leading-none"><span className="text-xs">[9590]</span> 종합차트</h1>
        <div className="ml-auto flex items-center gap-0.5 text-[#b4c0ae]">
          <button type="button" aria-label="창 분리"><Icon><path d="M5.500 6.500V13.500h9v-8H8M1.500 5V1.500H5M2 2l4 4M9 5.500v-2h5v2" /></Icon></button>
          <button type="button" aria-label="창 목록"><Icon><path d="M4.500 4V1.500h10v10H12M2.500 4.500h9v9h-9zM4.500 8.500l2 3 4-5" strokeWidth="1.300" /></Icon></button>
          <button type="button" aria-label="화면 저장"><Icon><path d="M2.500 4.500h3l1-1.500h3l1 1.500h3v9h-11z" /><circle cx="8" cy="9" r="2.300" /></Icon></button>
          <button type="button" aria-label="환경 설정"><Icon><circle cx="8" cy="8" r="3.500" strokeWidth="1.300" /><path d="M8 2v2M8 12v2M2 8h2M12 8h2M4 4l1 1M11 11l1 1M4 12l1-1M11 5l1-1" strokeWidth="1.800" /></Icon></button>
          <button type="button" aria-label="최소화" className="ml-1"><Icon><path d="M3 12.500h10" strokeWidth="2" /></Icon></button>
          <button type="button" aria-label="최대화"><Icon><path d="M3 4h10v8H3z" strokeWidth="2" /></Icon></button>
          <button type="button" aria-label="닫기"><Icon><path d="M4 3.500l8.500 9M12.500 3.500l-8.500 9" strokeWidth="2" /></Icon></button>
        </div>
      </header>
      <div className="flex flex-1 flex-col pr-1.5 pb-1.5 pl-[5px]">
        <Toolbar />
        <div className="flex flex-1">
          <Sidebar />
          <main className="ml-1.5 min-w-0 flex-1 border border-[#bdbdbb] bg-white">
            <QuoteBar />
            <div className="relative">
              <Chart />
              <PaneButtons letters={["L", "I", "R"]} place="top-0" />
              <PaneButtons letters={["L", "I"]} place="top-[563px]" close />
              <PaneButtons letters={["L", "I"]} place="top-[633px]" close />
            </div>
            <BottomBar />
          </main>
          <nav aria-label="그리기 도구" className="ml-[7px] flex w-[26px] flex-col self-start border border-[#d2d2d0] bg-[#fcfcfc] text-[#444]">
            {tools.map(([label, path], i) => (
              <button key={label} type="button" aria-label={label} className={`flex h-[22px] flex-col items-center justify-center ${i === 1 ? "border-b border-[#c6c6c4]" : ""} ${i === 12 ? "mx-px rounded-sm border border-[#aaa] bg-[#ececec]" : ""}`}>
                <Icon className={i === 8 ? "-mb-2" : ""}>{path}</Icon>
                {i === 8 && <span className="text-[7px] leading-none">AUTO</span>}
              </button>
            ))}
          </nav>
        </div>
      </div>
    </div>
  );
}
